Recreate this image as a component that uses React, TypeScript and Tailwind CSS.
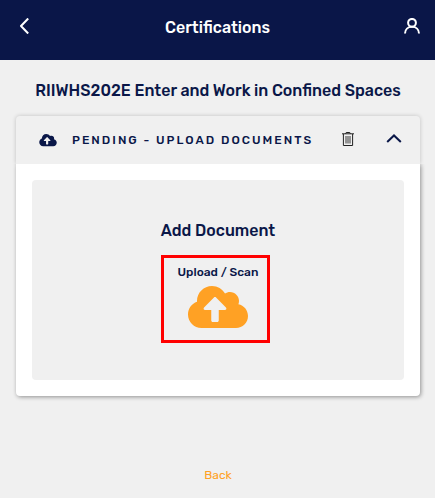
import { FaCloudUploadAlt } from "react-icons/fa";

const BackIcon = () => (
  <svg viewBox="0 0 10 16" className="h-4 w-[10px]" fill="none" stroke="currentColor" strokeWidth="2">
    <path d="M8.500 1.200 2 8l6.500 6.800" strokeLinecap="square" strokeLinejoin="round" />
  </svg>
);

const UserIcon = () => (
  <svg viewBox="0 0 16 16" className="h-4 w-4" fill="none" stroke="currentColor" strokeWidth="2">
    <circle cx="8" cy="4.800" r="3.900" />
    <path d="M1 15.500C1 11.500 4 8.800 8 8.800s7 2.700 7 6.700" />
  </svg>
);

const TrashIcon = () => (
  <svg viewBox="0 0 12 14" className="h-[14px] w-3" fill="none" stroke="currentColor">
    <path d="M0 1.800h12M1.400 2v11.500h9.200V2M3.600 1.800l.6-1.300h3.600l.6 1.300" />
    <path d="M4 4v7.500M6 4v7.500M8 4v7.500" strokeWidth="0.900" />
  </svg>
);

const ChevronIcon = () => (
  <svg viewBox="0 0 16 10" className="h-[10px] w-4" fill="none" stroke="currentColor" strokeWidth="2">
    <path d="M1.200 8 8 1.500 14.800 8" />
  </svg>
);

export default function App() {
  return (
    <div className="flex min-h-screen flex-col bg-[#f0f0f0] font-[Rubik,Roboto,sans-serif] text-[#0a1748]">
      <header className="grid h-[60px] grid-cols-[1fr_auto_1fr] items-center bg-[#0a1648] px-[15px] pb-2 text-white">
        <button aria-label="Go back" className="justify-self-start px-1">
          <BackIcon />
        </button>
        <h1 className="pt-1 text-base leading-6 font-medium">Certifications</h1>
        <button aria-label="Profile" className="justify-self-end">
          <UserIcon />
        </button>
      </header>

      <main className="flex flex-1 flex-col pt-[19px] pr-[15px] pl-4">
        <h2 className="mb-[13px] text-center text-base leading-6 font-medium">
          RIIWHS202E Enter and Work in Confined Spaces
        </h2>

        <section>
          <div className="flex h-12 items-center rounded-t bg-[#f0f0f0] pr-[18px] pl-[23px] shadow-[0_0_4px_rgba(0,0,0,0.2)]">
            <FaCloudUploadAlt className="h-[14px] w-[18px]" />
            <h3 className="ml-[15px] text-xs font-medium tracking-[2px] whitespace-nowrap">
              PENDING - UPLOAD DOCUMENTS
            </h3>
            <button aria-label="Delete" className="ml-auto pb-[2px] text-[#222222]">
              <TrashIcon />
            </button>
            <button aria-label="Collapse" className="ml-8 pb-[2px]">
              <ChevronIcon />
            </button>
          </div>

          <div className="rounded-b bg-white p-4 shadow-[1px_1px_4px_rgba(0,0,0,0.4)] [clip-path:inset(0_-8px_-8px_-8px)]">
            <div className="flex min-h-[200px] flex-col items-center rounded bg-[#f0f0f0] pt-[39px] pb-9">
              <h4 className="text-base leading-6 font-medium">Add Document</h4>
              <button className="mt-3 mr-[5px] flex h-[88px] w-[109px] flex-col items-center border-3 border-[#ff0000] pt-[6px] pl-[5px]">
                <span className="text-xs leading-4 font-medium">Upload / Scan</span>
                <FaCloudUploadAlt className="mt-[3px] h-12 w-[60px] text-[#ffa124]" />
              </button>
            </div>
          </div>
        </section>

        <a href="#back" className="mt-auto mb-[13px] self-center text-xs leading-5 text-[#ffa124]">
          Back
        </a>
      </main>
    </div>
  );
}
